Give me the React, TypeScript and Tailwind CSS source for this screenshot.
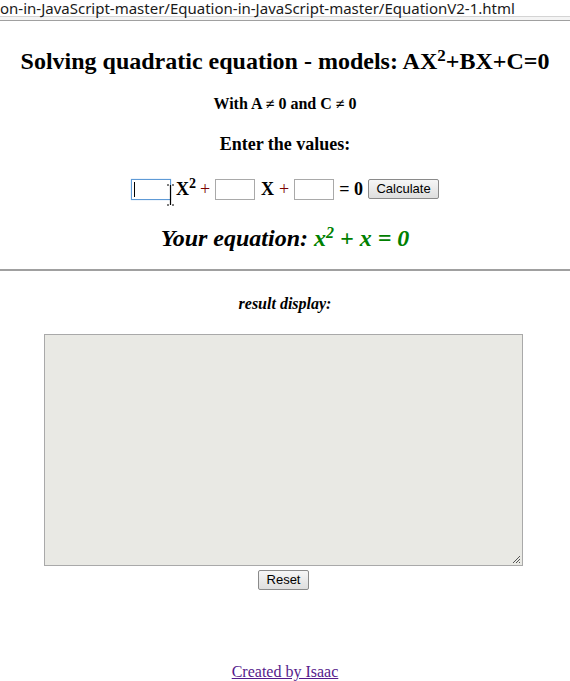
export default function App() {
  return (
    <div className="relative min-h-[681px] bg-white text-black" style={{ fontFamily: '"Liberation Serif", serif' }}>
      {/* address bar remnant */}
      <div className="whitespace-nowrap border-b border-[#d4d4d4] font-['Noto_Sans',sans-serif] text-[15px] leading-[16px] text-[#1a1a1a]">
        on-in-JavaScript-master/Equation-in-JavaScript-master/EquationV2-1.html
      </div>
      <div className="h-[4px] border-b border-[#a0a0a0] bg-[#f4f4f4]" />

      <h1 className="mt-[26px] text-center text-[24px] font-bold leading-[28px]">
        Solving quadratic equation - models: AX<sup className="text-[17px]">2</sup>+BX+C=0
      </h1>
      <p className="mt-[20px] text-center text-[16px] font-bold leading-[18px]">With A ≠ 0 and C ≠ 0</p>
      <p className="mt-[21px] text-center text-[18px] font-bold leading-[20px]">Enter the values:</p>

      <div className="mt-[24px] flex items-center justify-center text-[18px] leading-[22px]">
        <div className="relative">
          <input className="block h-[21px] w-[40px] border border-[#5e9ad6] bg-white shadow-[0_0_1px_#9cc3ea] outline-none" />
          <span className="absolute left-[3px] top-[3px] h-[15px] w-px bg-black" />
        </div>
        <span className="ml-[5px] font-bold">
          X<sup className="text-[14px]">2</sup>
        </span>
        <span className="ml-[4px] text-[#7a0000]">+</span>
        <input className="ml-[5px] h-[21px] w-[40px] border border-[#a9a9a9] bg-white outline-none" />
        <span className="ml-[6px] font-bold">X</span>
        <span className="ml-[5px] text-[#7a0000]">+</span>
        <input className="ml-[5px] h-[21px] w-[40px] border border-[#a9a9a9] bg-white outline-none" />
        <span className="ml-[5px] font-bold">= 0</span>
        <button className="ml-[5px] h-[20px] w-[71px] rounded-[2px] border border-[#8a8a8a] bg-gradient-to-b from-[#f6f6f6] to-[#dedede] font-['Liberation_Sans',sans-serif] text-[13px] leading-[18px]">
          Calculate
        </button>
      </div>

      <p className="mt-[24px] text-center text-[24px] font-bold italic leading-[28px]">
        Your equation: <span className="text-[#008000]">x<sup className="text-[16px]">2</sup> + x = 0</span>
      </p>

      <hr className="mt-[17px] border-t-2 border-[#a0a0a0]" />

      <p className="mt-[24px] text-center text-[16px] font-bold italic leading-[18px]">result display:</p>

      <div className="mt-[21px] ml-[44px] flex w-[479px] flex-col items-center">
        <div className="relative h-[232px] w-[479px] border border-[#a9a9a9] bg-[#e9e9e4]">
          <svg className="absolute bottom-[1px] right-[1px]" width="10" height="10" viewBox="0 0 10 10">
            <path d="M9 2 L2 9 M9 5 L5 9 M9 8 L8 9" stroke="#555" strokeWidth="1" />
          </svg>
        </div>
        <button className="mt-[4px] h-[20px] w-[51px] rounded-[2px] border border-[#8a8a8a] bg-gradient-to-b from-[#f6f6f6] to-[#dedede] font-['Liberation_Sans',sans-serif] text-[13px] leading-[18px]">
          Reset
        </button>
      </div>

      <div className="mt-[73px] text-center text-[16px] leading-[18px]">
        <a href="#" className="text-[#551a8b] underline">Created by Isaac</a>
      </div>

      {/* mouse I-beam cursor */}
      <svg className="absolute left-[166px] top-[184px]" width="9" height="22" viewBox="0 0 9 22">
        <path d="M1 1 H3 M6 1 H8 M4.5 1 V21 M1 21 H3 M6 21 H8" stroke="#000" strokeWidth="1.2" fill="none" />
      </svg>
    </div>
  );
}
